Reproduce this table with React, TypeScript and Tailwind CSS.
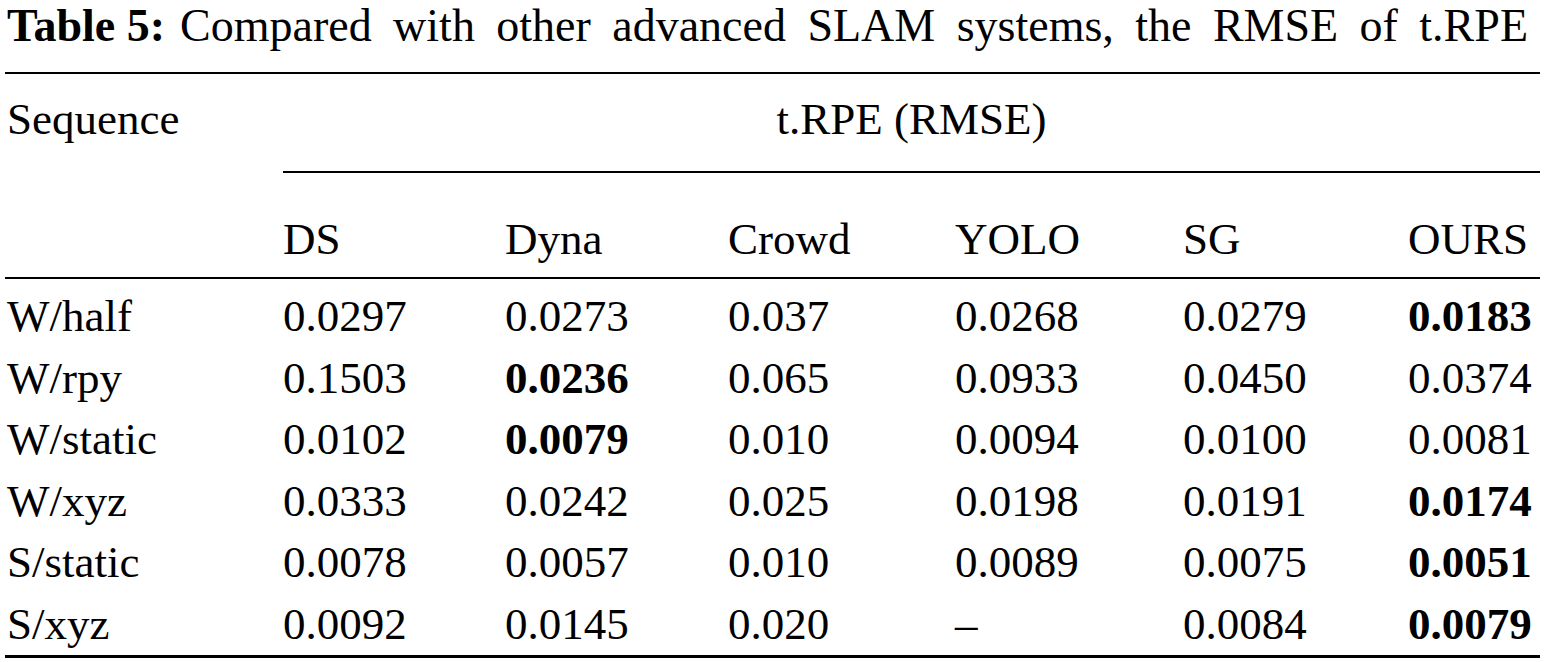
import React from 'react';

const cols = ['DS', 'Dyna', 'Crowd', 'YOLO', 'SG', 'OURS'];

// bold marks the best value in a row
const rows: { name: string; values: string[]; bold: number[] }[] = [
  { name: 'W/half', values: ['0.0297', '0.0273', '0.037', '0.0268', '0.0279', '0.0183'], bold: [5] },
  { name: 'W/rpy', values: ['0.1503', '0.0236', '0.065', '0.0933', '0.0450', '0.0374'], bold: [1] },
  { name: 'W/static', values: ['0.0102', '0.0079', '0.010', '0.0094', '0.0100', '0.0081'], bold: [1] },
  { name: 'W/xyz', values: ['0.0333', '0.0242', '0.025', '0.0198', '0.0191', '0.0174'], bold: [5] },
  { name: 'S/static', values: ['0.0078', '0.0057', '0.010', '0.0089', '0.0075', '0.0051'], bold: [5] },
  { name: 'S/xyz', values: ['0.0092', '0.0145', '0.020', '–', '0.0084', '0.0079'], bold: [5] },
];

const grid = 'grid grid-cols-[278px_222px_223px_227px_228px_225px_1fr]';

export default function App() {
  return (
    <div className="w-[1546px] h-[662px] bg-white text-black overflow-hidden font-['Liberation_Serif','Times_New_Roman',serif]">
      <div className="pl-[5px] pr-[6px]">
        {/* caption */}
        <div className="flex h-[72px] pl-[2px] pr-[12px] text-[46px] leading-[51px]">
          <span className="font-bold mr-[15px] whitespace-nowrap">Table 5:</span>
          <span className="flex-1 [text-align-last:justify]">
            Compared with other advanced SLAM systems, the RMSE of t.RPE
          </span>
        </div>
        <div className="h-[2px] bg-black" />

        {/* header */}
        <div className="flex text-[45px]">
          <div className="w-[278px] pl-[2px] pt-[15px] leading-[61px]">Sequence</div>
          <div className="flex-1">
            <div className="h-[97px] pt-[15px] leading-[61px] text-center">t.RPE (RMSE)</div>
            <div className="h-[2px] bg-black" />
            <div className="grid grid-cols-[222px_223px_227px_228px_225px_1fr] h-[104px] pt-[36px] leading-[61px]">
              {cols.map((c) => (
                <div key={c}>{c}</div>
              ))}
            </div>
          </div>
        </div>
        <div className="h-[2px] bg-black" />

        {/* body */}
        <div className="pt-[7px] text-[45px]">
          {rows.map((r) => (
            <div key={r.name} className={`${grid} h-[61.5px] leading-[61.5px]`}>
              <div className="pl-[2px]">{r.name}</div>
              {r.values.map((v, i) => (
                <div key={i} className={r.bold.includes(i) ? 'font-bold' : ''}>
                  {v}
                </div>
              ))}
            </div>
          ))}
        </div>
        <div className="h-[3px] bg-black" />
      </div>
    </div>
  );
}
